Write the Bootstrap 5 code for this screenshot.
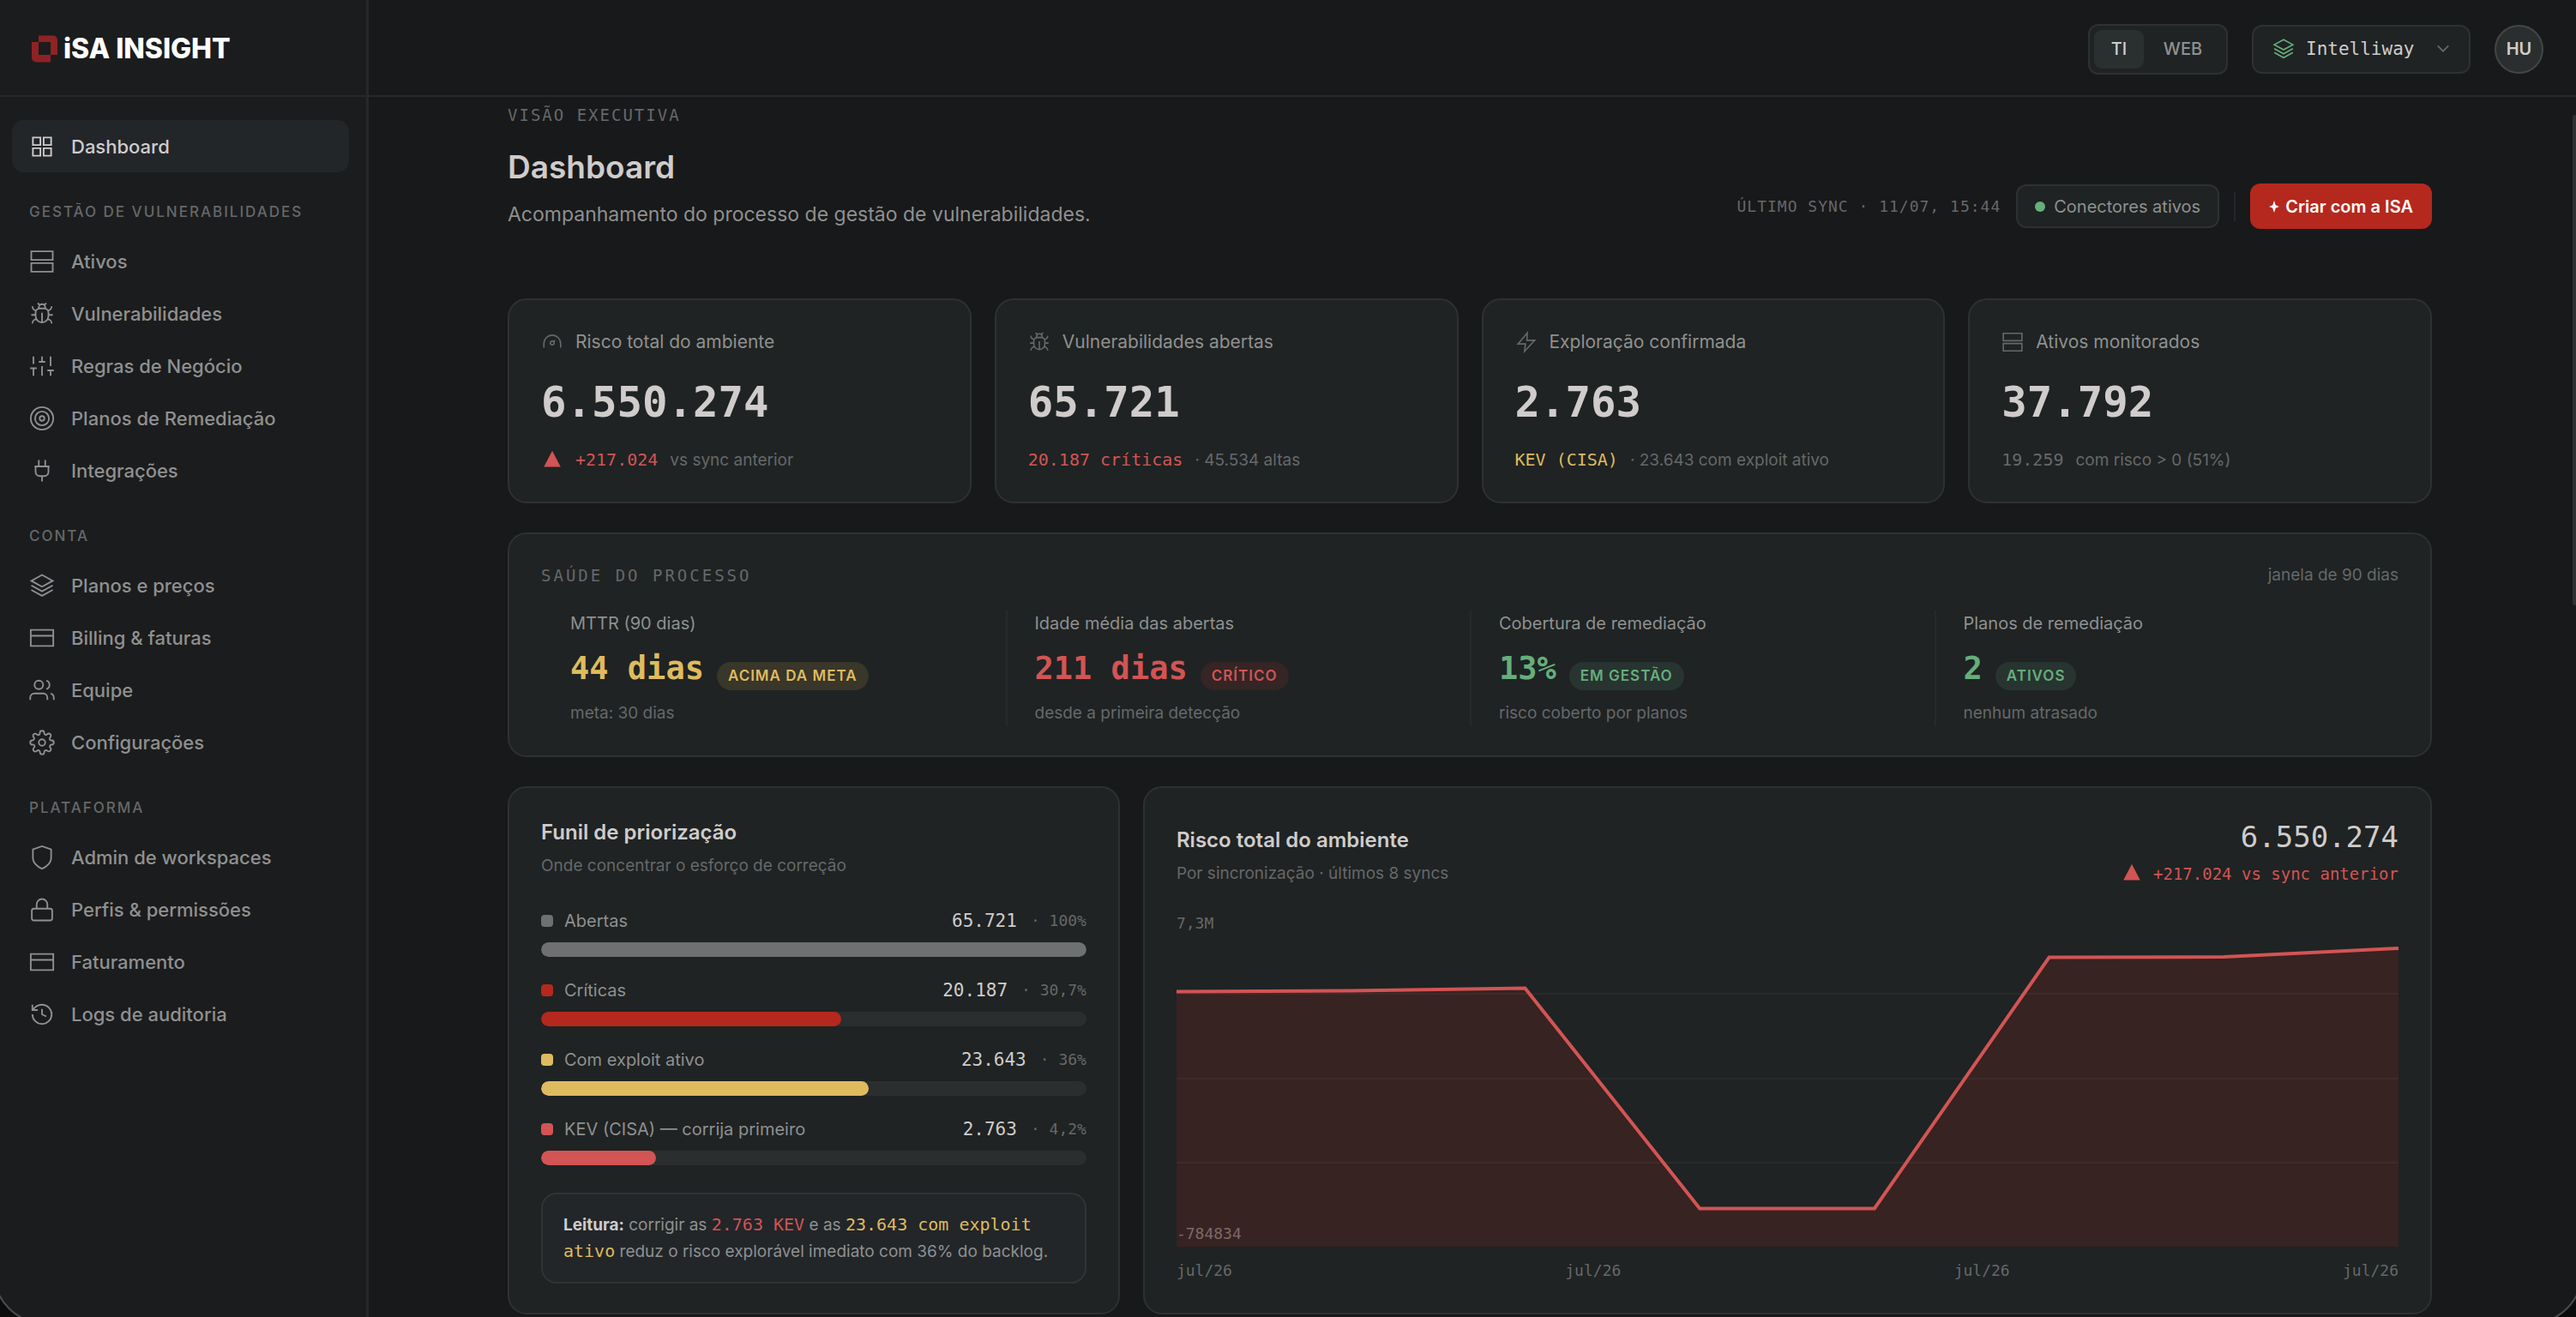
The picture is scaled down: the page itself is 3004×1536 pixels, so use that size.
<!DOCTYPE html>
<html lang="pt-BR" data-bs-theme="dark">
<head>
<meta charset="utf-8">
<meta name="viewport" content="width=device-width, initial-scale=1">
<title>ISA Insight — Dashboard</title>
<link rel="stylesheet" href="https://cdn.jsdelivr.net/npm/bootstrap@5.3.0/dist/css/bootstrap.min.css">
<style>
:root{
  --page:#18191a; --side:#1b1c1d; --panel:#1f2323; --line:#2e3132; --track:#2a2e2f;
  --strong:#cfcccb; --text:#8f9090; --dim:#66686a;
  --red:#d35454; --brand:#b5281e; --gold:#dfbb5f; --green:#66ae7c;
}
body{font-family:Inter,"Liberation Sans",sans-serif;font-size:20px;line-height:28px;background:var(--page);color:var(--text);height:100vh;overflow:hidden}
.mono{font-family:"DejaVu Sans Mono","Liberation Mono",monospace}
.strong{color:var(--strong)} .dim{color:var(--dim)}
.red{color:var(--red)} .gold{color:var(--gold)} .green{color:var(--green)}
svg.ico{width:30px;height:30px;flex:none;fill:none;stroke:currentColor;stroke-width:1.5}
svg.ico-sm{width:26px;height:26px}
svg.tri{width:26px;height:26px;flex:none;fill:currentColor}

/* sidebar */
.side{width:430px;flex:none;background:var(--side);border-right:3px solid #26282a}
.brand{height:113px;border-bottom:2px solid #26282a;padding:2px 36px 0;gap:6px;color:#fff;font-weight:800;font-size:32px;text-decoration:none}
.brand svg{width:32px;height:32px}
.side nav{padding:27px 20px 0 14px}
.side .nav-link{display:flex;align-items:center;gap:19px;height:61px;padding:0 20px;border-radius:14px;color:var(--text);font-size:22px;font-weight:500}
.side .nav-link.active{background:#232629;color:var(--strong)}
.side-label{font-size:17px;line-height:26px;letter-spacing:2px;color:var(--dim);font-weight:500;padding:33px 20px 14px;margin:0}

/* top bar */
.topbar{height:113px;border-bottom:2px solid #26282a;padding:3px 38px 0 30px;gap:28px;flex:none}
.box{background:var(--panel);border:2px solid var(--line);border-radius:12px}
.scope{height:59px;padding:5px;width:163px}
.scope button{border:0;background:none;color:var(--text);font-size:20px;font-weight:500;border-radius:9px;padding:0;flex:1 1 0}
.scope button.on{background:#2a2f30;color:var(--strong);flex:0 0 58px}
.space{height:57px;padding:0 22px;gap:11px;width:255px;color:var(--dim)}
.space select{appearance:none;background:none;border:0;color:var(--strong);font-size:21px;outline:0;flex:1;min-width:0;padding:0 0 0 2px}
.avatar{width:57px;height:57px;border-radius:50%;background:#2a2e2f;border:2px solid #434647;color:var(--strong);font-weight:600;font-size:20px;padding:0}

/* page */
.scroller{overflow:hidden;padding:7px 6px 0 0}
.wrapper{max-width:2244px;margin:0 auto}
.eyebrow{font-size:19px;letter-spacing:2px;color:var(--dim)}
h1{font-size:37px;line-height:46px;font-weight:600;color:var(--strong);margin:24px 0 15px}
.lede{font-size:23px;line-height:34px;margin:0}
.page-head{margin-bottom:81px}
.sync{font-size:18px;letter-spacing:1px;color:var(--dim);margin-right:18px}
.chip{height:51px;padding:0 20px;font-size:20px;color:var(--text);gap:10px}
.chip i{width:12px;height:12px;border-radius:50%;background:var(--green)}
.rule{width:2px;height:34px;background:#242728;margin:0 17px}
.cta{height:53px;border:0;border-radius:12px;background:var(--brand);color:#fff;font-size:20px;font-weight:600;padding:0 22px;gap:7px}
.cta svg{width:12px;height:14px;fill:#fff}

.panel{background:var(--panel);border:2px solid var(--line);border-radius:22px;padding:34px 37px}
.kpis{display:grid;grid-template-columns:repeat(4,1fr);gap:27px;margin-bottom:34px}
.kpi-name{gap:14px;font-size:21px;line-height:30px}
.kpi-name svg{color:var(--dim)}
.kpi-num{font-size:49px;line-height:54px;font-weight:700;color:var(--strong);margin:29px 0 25px}
.kpi-sub{font-size:19px;line-height:29px;gap:14px;color:var(--dim)}
.kpi-sub .mono{font-size:20px}

.health{margin-bottom:34px}
.health-title{font-size:19px;letter-spacing:3px;color:var(--dim);margin:0;font-weight:400;line-height:28px}
.metrics{display:grid;grid-template-columns:repeat(4,1fr);margin-top:27px}
.metric{padding:1px 32px 2px;border-left:2px solid #262a2b}
.metric:first-child{border-color:transparent}
.metric-val{margin-top:18px;gap:15px}
.metric-val b{font-size:37px;line-height:42px}
.pill{font-size:17px;line-height:33px;font-weight:600;border-radius:17px;padding:0 13px;letter-spacing:1px;margin-top:13px}
.pill.gold{background:#39362a}.pill.red{background:#352525}.pill.green{background:#283430}
.metric-sub{font-size:19px;line-height:26px;color:var(--dim);margin-top:14px}

.lower{display:grid;grid-template-columns:minmax(0,95fr) minmax(0,200fr);gap:27px}
.lower .panel{padding-top:37px}
.h-card{font-size:24px;line-height:30px;font-weight:600;color:var(--strong);margin:0 0 11px}
.h-sub{font-size:19px;line-height:26px;color:var(--dim);margin:0}
.funnel{margin:37px 0 32px;display:grid;gap:25px}
.funnel-row{font-size:20px;line-height:28px}
.swatch{width:14px;height:14px;border-radius:4px;margin-right:13px}
.funnel-num{font-size:21px}.funnel-pct{font-size:18px;margin-left:16px}
.meter{height:17px;border-radius:9px;background:var(--track);margin-top:11px;overflow:hidden}
.meter div{height:100%;border-radius:9px}
.bg-a{background:#6e7071}.bg-b{background:var(--brand)}.bg-c{background:var(--gold)}.bg-d{background:var(--red)}
.note{background:#222629;border:2px solid #303436;border-radius:18px;padding:20px 24px;font-size:19px;line-height:30px}
.note .mono{font-size:20px}
.chart-num{font-size:34px;line-height:40px}
.chart-delta{font-size:19px;line-height:26px;margin-top:10px;gap:12px}
.plot{height:394px;margin-top:28px}
.plot svg{width:100%;height:100%;display:block}
.tick{font-size:18px;line-height:26px;color:var(--dim)}
.tick-top{top:4px;left:0}.tick-bottom{bottom:2px;left:0;color:#7d6a6a}
.ticks-x{margin-top:15px}
.thumb{width:6px;height:572px;top:134px;right:-2px;border-radius:3px;background:#303334}
.frame{inset:-80px -8px -8px -8px;border:2px solid #4a4c4d;border-radius:60px;box-shadow:0 0 0 40px #0c0c0d;pointer-events:none}
</style>
<script src="https://cdn.jsdelivr.net/npm/bootstrap@5.3.0/dist/js/bootstrap.bundle.min.js" defer></script>
</head>
<body class="d-flex">
<svg class="d-none">
  <symbol id="grid" viewBox="0 0 24 24"><path d="M3.5 3.5h7v7h-7zM13.5 3.5h7v7h-7zM3.5 13.5h7v7h-7zM13.5 13.5h7v7h-7z"/></symbol>
  <symbol id="server" viewBox="0 0 24 24"><path d="M2 2.5h20v8H2zM2 13.500h20v8H2zM6 6.500h.01M6 17.500h.01"/></symbol>
  <symbol id="bug" viewBox="0 0 24 24"><path d="M12 20v-9M14 7a4 4 0 0 1 4 4v3a6 6 0 0 1-12 0v-3a4 4 0 0 1 4-4zM14.120 3.880 16 2M8 2l1.880 1.880M9 7.130V6a3 3 0 1 1 6 0v1.130M21 21a4 4 0 0 0-3.810-4M21 5a4 4 0 0 1-3.550 3.970M22 13h-4M3 21a4 4 0 0 1 3.810-4M3 5a4 4 0 0 0 3.550 3.970M6 13H2"/></symbol>
  <symbol id="sliders" viewBox="0 0 24 24"><path d="M4 21v-7M4 10V3M12 21v-9M12 8V3M20 21v-5M20 12V3M1 14h6M9 8h6M17 16h6"/></symbol>
  <symbol id="target" viewBox="0 0 24 24"><circle cx="12" cy="12" r="10.500"/><circle cx="12" cy="12" r="6.500"/><circle cx="12" cy="12" r="2.200"/></symbol>
  <symbol id="plug" viewBox="0 0 24 24"><path d="M12 22v-5M9 8V2M15 8V2M18 8v5a4 4 0 0 1-4 4h-4a4 4 0 0 1-4-4V8zM5 8h14"/></symbol>
  <symbol id="layers" viewBox="0 0 24 24"><path d="M12 2 22 7.500 12 13 2 7.500zM2 11.800l10 5.500 10-5.500M2 16l10 5.500L22 16"/></symbol>
  <symbol id="card" viewBox="0 0 24 24"><path d="M1.500 4.500h21v15h-21zM1.500 10h21"/></symbol>
  <symbol id="users" viewBox="0 0 24 24"><path d="M17 21v-2a4 4 0 0 0-4-4H5a4 4 0 0 0-4 4v2M23 21v-2a4 4 0 0 0-3-3.870M16 3.130a4 4 0 0 1 0 7.750"/><circle cx="9" cy="7" r="4"/></symbol>
  <symbol id="gear" viewBox="0 0 24 24"><circle cx="12" cy="12" r="3"/><path d="M19.400 15a1.650 1.650 0 0 0 .33 1.820l.06.06a2 2 0 1 1-2.830 2.830l-.06-.06a1.650 1.650 0 0 0-2.800 1.170V21a2 2 0 0 1-4 0v-.09a1.650 1.650 0 0 0-2.900-1.080l-.06.06a2 2 0 1 1-2.830-2.830l.06-.06A1.650 1.650 0 0 0 3.090 14H3a2 2 0 0 1 0-4h.09a1.650 1.650 0 0 0 1.170-2.800l-.06-.06a2 2 0 1 1 2.830-2.830l.06.06A1.650 1.650 0 0 0 10 3.090V3a2 2 0 0 1 4 0v.09a1.650 1.650 0 0 0 2.820 1.170l.06-.06a2 2 0 1 1 2.830 2.830l-.06.06A1.650 1.650 0 0 0 20.910 10H21a2 2 0 0 1 0 4h-.09a1.650 1.650 0 0 0-1.510 1z"/></symbol>
  <symbol id="shield" viewBox="0 0 24 24"><path d="M12 22.500s8.500-3.500 8.500-10V4.500L12 1.500l-8.500 3v8c0 6.500 8.500 10 8.500 10z"/></symbol>
  <symbol id="lock" viewBox="0 0 24 24"><rect x="2.500" y="11" width="19" height="11" rx="2"/><path d="M7 11V7a5 5 0 0 1 10 0v4"/></symbol>
  <symbol id="history" viewBox="0 0 24 24"><path d="M3 12a9 9 0 1 0 9-9 9.750 9.750 0 0 0-6.740 2.740L3 8M3 3v5h5M12 7v5l4 2"/></symbol>
  <symbol id="gauge" viewBox="0 0 24 24"><path d="M3 18v-4.500a9 9 0 0 1 18 0V18M13.400 11.800 15 10"/><circle cx="12" cy="13" r="2"/></symbol>
  <symbol id="zap" viewBox="0 0 24 24"><path d="M13 2 3 14h8l-1 8 11-12h-8.500z"/></symbol>
  <symbol id="up" viewBox="0 0 24 24"><path d="M12 1.500 21 19H3z"/></symbol>
</svg>

<aside class="side">
  <a href="#" class="brand d-flex align-items-center">
    <svg viewBox="0 0 32 32" aria-hidden="true"><path fill="#8e2225" fill-rule="evenodd" d="M9 .5h17a5 5 0 0 1 5 5V23H9zM1 8h22v23.500H6a5 5 0 0 1-5-5z"/></svg>
    <span>iSA INSIGHT</span>
  </a>
  <nav class="nav flex-column flex-nowrap">
    <a class="nav-link active" href="#"><svg class="ico"><use href="#grid"/></svg>Dashboard</a>
    <p class="side-label">GESTÃO DE VULNERABILIDADES</p>
    <a class="nav-link" href="#"><svg class="ico"><use href="#server"/></svg>Ativos</a>
    <a class="nav-link" href="#"><svg class="ico"><use href="#bug"/></svg>Vulnerabilidades</a>
    <a class="nav-link" href="#"><svg class="ico"><use href="#sliders"/></svg>Regras de Negócio</a>
    <a class="nav-link" href="#"><svg class="ico"><use href="#target"/></svg>Planos de Remediação</a>
    <a class="nav-link" href="#"><svg class="ico"><use href="#plug"/></svg>Integrações</a>
    <p class="side-label">CONTA</p>
    <a class="nav-link" href="#"><svg class="ico"><use href="#layers"/></svg>Planos e preços</a>
    <a class="nav-link" href="#"><svg class="ico"><use href="#card"/></svg>Billing &amp; faturas</a>
    <a class="nav-link" href="#"><svg class="ico"><use href="#users"/></svg>Equipe</a>
    <a class="nav-link" href="#"><svg class="ico"><use href="#gear"/></svg>Configurações</a>
    <p class="side-label">PLATAFORMA</p>
    <a class="nav-link" href="#"><svg class="ico"><use href="#shield"/></svg>Admin de workspaces</a>
    <a class="nav-link" href="#"><svg class="ico"><use href="#lock"/></svg>Perfis &amp; permissões</a>
    <a class="nav-link" href="#"><svg class="ico"><use href="#card"/></svg>Faturamento</a>
    <a class="nav-link" href="#"><svg class="ico"><use href="#history"/></svg>Logs de auditoria</a>
  </nav>
</aside>

<div class="flex-grow-1 d-flex flex-column overflow-hidden">
  <header class="topbar d-flex align-items-center justify-content-end">
    <div class="box scope d-flex" role="group" aria-label="Escopo">
      <button type="button" class="on">TI</button><button type="button">WEB</button>
    </div>
    <label class="box space d-flex align-items-center">
      <svg class="ico ico-sm green"><use href="#layers"/></svg>
      <select class="mono" aria-label="Workspace"><option>Intelliway</option></select>
      <svg width="16" height="16" viewBox="0 0 18 18" fill="none" stroke="currentColor" stroke-width="2"><path d="m2 5 7 7 7-7"/></svg>
    </label>
    <button type="button" class="avatar">HU</button>
  </header>

  <main class="scroller flex-grow-1">
    <div class="wrapper">
      <div class="page-head d-flex justify-content-between align-items-end">
        <div>
          <div class="eyebrow mono">VISÃO EXECUTIVA</div>
          <h1>Dashboard</h1>
          <p class="lede">Acompanhamento do processo de gestão de vulnerabilidades.</p>
        </div>
        <div class="d-flex align-items-center">
          <span class="sync mono">ÚLTIMO SYNC · 11/07, 15:44</span>
          <button type="button" class="box chip d-flex align-items-center"><i></i>Conectores ativos</button>
          <span class="rule"></span>
          <button type="button" class="cta d-flex align-items-center"><svg viewBox="0 0 10 12"><path d="M5 0 6.500 4.500 10 6 6.500 7.500 5 12 3.500 7.500 0 6 3.500 4.500z"/></svg>Criar com a ISA</button>
        </div>
      </div>

      <section class="kpis">
        <div class="panel">
          <div class="kpi-name d-flex align-items-center"><svg class="ico ico-sm"><use href="#gauge"/></svg>Risco total do ambiente</div>
          <div class="kpi-num mono">6.550.274</div>
          <div class="kpi-sub d-flex align-items-center"><svg class="tri red"><use href="#up"/></svg><span class="mono red">+217.024</span><span>vs sync anterior</span></div>
        </div>
        <div class="panel">
          <div class="kpi-name d-flex align-items-center"><svg class="ico ico-sm"><use href="#bug"/></svg>Vulnerabilidades abertas</div>
          <div class="kpi-num mono">65.721</div>
          <div class="kpi-sub d-flex align-items-center"><span class="mono red">20.187 críticas</span><span>· 45.534 altas</span></div>
        </div>
        <div class="panel">
          <div class="kpi-name d-flex align-items-center"><svg class="ico ico-sm"><use href="#zap"/></svg>Exploração confirmada</div>
          <div class="kpi-num mono">2.763</div>
          <div class="kpi-sub d-flex align-items-center"><span class="mono gold">KEV (CISA)</span><span>· 23.643 com exploit ativo</span></div>
        </div>
        <div class="panel">
          <div class="kpi-name d-flex align-items-center"><svg class="ico ico-sm"><use href="#server"/></svg>Ativos monitorados</div>
          <div class="kpi-num mono">37.792</div>
          <div class="kpi-sub d-flex align-items-center"><span class="mono">19.259</span><span>com risco &gt; 0 (51%)</span></div>
        </div>
      </section>

      <section class="panel health">
        <div class="d-flex justify-content-between align-items-center">
          <h2 class="health-title mono">SAÚDE DO PROCESSO</h2>
          <span class="h-sub">janela de 90 dias</span>
        </div>
        <div class="metrics">
          <div class="metric"><div>MTTR (90 dias)</div>
            <div class="metric-val d-flex align-items-start"><b class="mono gold">44 dias</b><span class="pill gold">ACIMA DA META</span></div>
            <div class="metric-sub">meta: 30 dias</div></div>
          <div class="metric"><div>Idade média das abertas</div>
            <div class="metric-val d-flex align-items-start"><b class="mono red">211 dias</b><span class="pill red">CRÍTICO</span></div>
            <div class="metric-sub">desde a primeira detecção</div></div>
          <div class="metric"><div>Cobertura de remediação</div>
            <div class="metric-val d-flex align-items-start"><b class="mono green">13%</b><span class="pill green">EM GESTÃO</span></div>
            <div class="metric-sub">risco coberto por planos</div></div>
          <div class="metric"><div>Planos de remediação</div>
            <div class="metric-val d-flex align-items-start"><b class="mono green">2</b><span class="pill green">ATIVOS</span></div>
            <div class="metric-sub">nenhum atrasado</div></div>
        </div>
      </section>

      <section class="lower">
        <div class="panel">
          <h2 class="h-card">Funil de priorização</h2>
          <p class="h-sub">Onde concentrar o esforço de correção</p>
          <div class="funnel">
            <div>
              <div class="funnel-row d-flex align-items-center"><span class="swatch bg-a"></span>Abertas<span class="ms-auto mono strong funnel-num">65.721</span><span class="mono dim funnel-pct">· 100%</span></div>
              <div class="meter"><div class="bg-a" style="width:100%"></div></div>
            </div>
            <div>
              <div class="funnel-row d-flex align-items-center"><span class="swatch bg-b"></span>Críticas<span class="ms-auto mono strong funnel-num">20.187</span><span class="mono dim funnel-pct">· 30,7%</span></div>
              <div class="meter"><div class="bg-b" style="width:55%"></div></div>
            </div>
            <div>
              <div class="funnel-row d-flex align-items-center"><span class="swatch bg-c"></span>Com exploit ativo<span class="ms-auto mono strong funnel-num">23.643</span><span class="mono dim funnel-pct">· 36%</span></div>
              <div class="meter"><div class="bg-c" style="width:60%"></div></div>
            </div>
            <div>
              <div class="funnel-row d-flex align-items-center"><span class="swatch bg-d"></span>KEV (CISA) — corrija primeiro<span class="ms-auto mono strong funnel-num">2.763</span><span class="mono dim funnel-pct">· 4,2%</span></div>
              <div class="meter"><div class="bg-d" style="width:21%"></div></div>
            </div>
          </div>
          <div class="note"><b class="strong">Leitura:</b> corrigir as <span class="mono red">2.763 KEV</span> e as <span class="mono gold">23.643 com exploit ativo</span> reduz o risco explorável imediato com 36% do backlog.</div>
        </div>

        <div class="panel">
          <div class="d-flex justify-content-between align-items-end">
            <div><h2 class="h-card">Risco total do ambiente</h2><p class="h-sub">Por sincronização · últimos 8 syncs</p></div>
            <div class="text-end">
              <div class="chart-num mono strong">6.550.274</div>
              <div class="chart-delta mono red d-flex align-items-center"><svg class="tri"><use href="#up"/></svg>+217.024 vs sync anterior</div>
            </div>
          </div>
          <div class="plot position-relative">
            <svg viewBox="0 0 1427 394" preserveAspectRatio="none" role="img" aria-label="Risco total por sincronização">
              <path d="M0 96.500 203 95.500 407 92.500 611 349.500 815 349.500 1019 56.500 1223 56 1427 46V394H0z" fill="#b5281e" fill-opacity=".16"/>
              <path d="M0 99H1427M0 198H1427M0 296H1427" stroke="#fff" stroke-opacity=".04" stroke-width="2"/>
              <path d="M0 96.500 203 95.500 407 92.500 611 349.500 815 349.500 1019 56.500 1223 56 1427 46" fill="none" stroke="#d35454" stroke-width="4"/>
            </svg>
            <span class="tick tick-top mono position-absolute">7,3M</span>
            <span class="tick tick-bottom mono position-absolute">-784834</span>
          </div>
          <div class="ticks-x tick mono d-flex justify-content-between"><span>jul/26</span><span>jul/26</span><span>jul/26</span><span>jul/26</span></div>
        </div>
      </section>
    </div>
  </main>
</div>
<div class="thumb position-fixed"></div>
<div class="frame position-fixed"></div>
</body>
</html>
